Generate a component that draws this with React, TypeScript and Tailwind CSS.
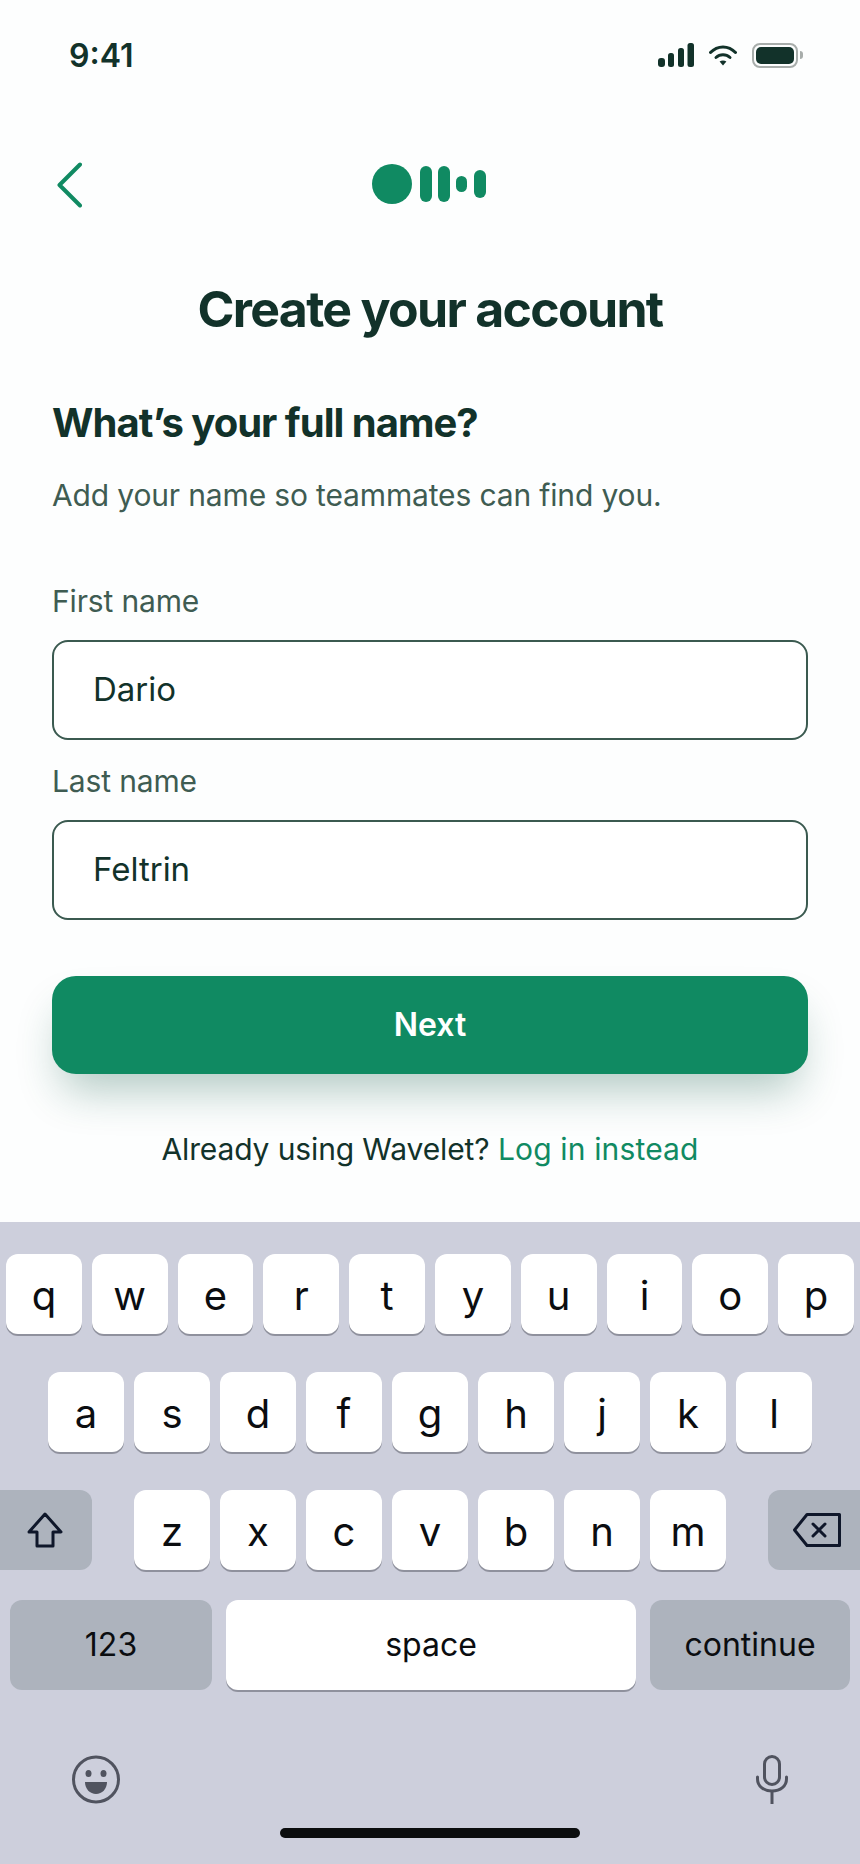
const DARK = "text-[#12322a]";

const rowOne = ["q", "w", "e", "r", "t", "y", "u", "i", "o", "p"];
const rowTwo = ["a", "s", "d", "f", "g", "h", "j", "k", "l"];
const rowThree = ["z", "x", "c", "v", "b", "n", "m"];

function StatusIcons() {
  return (
    <div className="flex items-center">
      {/* signal */}
      <svg width="36" height="24" viewBox="0 0 36 24" fill="#12322a">
        <rect x="0" y="15" width="7" height="9" rx="3" />
        <rect x="10" y="10" width="6" height="14" rx="2.5" />
        <rect x="20" y="5" width="6" height="19" rx="2.5" />
        <rect x="29.5" y="0" width="6.5" height="24" rx="2.5" />
      </svg>
      {/* wifi */}
      <svg className="ml-[15px]" width="28" height="22" viewBox="0 0 28 22" fill="none">
        <path d="M1.5 8.5C8.5 1 19.5 1 26.5 8.5" stroke="#12322a" strokeWidth="3" strokeLinecap="round" />
        <path d="M7 13.5C11 9.8 17 9.8 21 13.5" stroke="#12322a" strokeWidth="3" strokeLinecap="round" />
        <path d="M10.6 17.6C12.5 16 15.5 16 17.4 17.6L14 21.5Z" fill="#12322a" />
      </svg>
      {/* battery */}
      <div className="ml-[15px] flex items-center">
        <div className="w-[46px] h-[25px] rounded-[8px] border-2 border-[#a8adab] p-[2px]">
          <div className="w-full h-full rounded-[5px] bg-[#12322a]" />
        </div>
        <div className="ml-[2px] w-[3px] h-[8px] rounded-r-full bg-[#a8adab]" />
      </div>
    </div>
  );
}

function Logo() {
  return (
    <svg width="114" height="40" viewBox="0 0 114 40" fill="#108a62">
      <circle cx="20" cy="20" r="20" />
      <rect x="48" y="2" width="12" height="36" rx="6" />
      <rect x="66" y="2" width="12" height="36" rx="6" />
      <rect x="84" y="12" width="11" height="16" rx="5.5" />
      <rect x="102" y="6" width="12" height="28" rx="6" />
    </svg>
  );
}

function Field({ label, value, className }: { label: string; value: string; className: string }) {
  return (
    <div className={className}>
      <div className="h-[36px] leading-[36px] text-[30px] tracking-[-0.15px] text-[#3f5c52]">{label}</div>
      <div className={`mt-[21px] h-[100px] rounded-[16px] border-2 border-[#3b5a50] bg-white pl-[39px] flex items-center text-[33px] ${DARK}`}>
        {value}
      </div>
    </div>
  );
}

function Key({ label, className = "" }: { label: string; className?: string }) {
  return (
    <div className={`h-[80px] flex items-center justify-center rounded-[12px] bg-white shadow-[0_2px_0_#8f919d] text-[40px] text-[#0b0d10] pt-[4px] ${className}`}>
      {label}
    </div>
  );
}

export default function App() {
  return (
    <div className="w-[860px] h-[1864px] bg-[#fdfefe] flex flex-col overflow-hidden font-['Inter',sans-serif]">
      {/* status bar */}
      <div className="mt-[33px] h-[44px] pl-[69px] pr-[57px] flex items-center justify-between">
        <span className={`pt-[2px] text-[32px] font-semibold ${DARK}`}>9:41</span>
        <StatusIcons />
      </div>

      {/* nav */}
      <div className="mt-[86px] h-[44px] pl-[57px] pr-[57px] relative flex items-center">
        <svg width="25" height="46" viewBox="0 0 25 46" fill="none">
          <path d="M23 2.5L2.5 23L23 43.5" stroke="#108a62" strokeWidth="4" strokeLinecap="round" strokeLinejoin="round" />
        </svg>
        <div className="absolute left-[372px] top-[1px]">
          <Logo />
        </div>
      </div>

      <h1 className={`mt-[74px] h-[56px] leading-[56px] text-center text-[50px] font-bold tracking-[-1.7px] ${DARK}`}>Create your account</h1>

      <div className="px-[52px]">
        <h2 className={`mt-[62px] h-[48px] leading-[48px] text-[40px] font-bold tracking-[-1px] ${DARK}`}>What’s your full name?</h2>
        <p className="mt-[28px] h-[40px] leading-[40px] text-[30px] tracking-[-0.15px] text-[#3f5c52]">Add your name so teammates can find you.</p>

        <Field className="mt-[68px]" label="First name" value="Dario" />
        <Field className="mt-[23px]" label="Last name" value="Feltrin" />

        <button className="mt-[56px] w-full h-[98px] rounded-[24px] bg-[#108a62] text-white text-[32px] font-semibold shadow-[0_26px_44px_-10px_rgba(20,90,70,0.32)]">
          Next
        </button>

        <p className={`mt-[55px] h-[40px] leading-[40px] text-center text-[30px] ${DARK}`}>
          <span className="tracking-[-0.12px]">Already using Wavelet?</span> <span className="tracking-[0.15px] text-[#108a62]">Log in instead</span>
        </p>
      </div>

      {/* keyboard */}
      <div className="mt-auto h-[642px] bg-[#cdcfdc] pt-[32px] flex flex-col">
        <div className="px-[6px] flex gap-[10px]">
          {rowOne.map((k) => (
            <Key key={k} label={k} className="flex-1" />
          ))}
        </div>
        <div className="mt-[38px] pl-[48px] flex gap-[10px]">
          {rowTwo.map((k) => (
            <Key key={k} label={k} className="w-[76px]" />
          ))}
        </div>
        <div className="mt-[38px] flex justify-between">
          <div className="w-[92px] h-[80px] rounded-r-[12px] bg-[#adb3bd] flex items-center justify-center pr-[2px]">
            <svg width="36" height="36" viewBox="0 0 36 36" fill="none">
              <path d="M18 2L34 20H26V34H10V20H2Z" stroke="#0f172a" strokeWidth="3" strokeLinejoin="round" />
            </svg>
          </div>
          <div className="flex gap-[10px]">
            {rowThree.map((k) => (
              <Key key={k} label={k} className="w-[76px]" />
            ))}
          </div>
          <div className="w-[92px] h-[80px] rounded-l-[12px] bg-[#adb3bd] flex items-center justify-center pl-[5px]">
            <svg width="48" height="34" viewBox="0 0 48 34" fill="none">
              <path d="M14 1.5H46.5V32.5H14L1.5 17Z" stroke="#0f172a" strokeWidth="3" strokeLinejoin="round" />
              <path d="M20 11L32 23M32 11L20 23" stroke="#0f172a" strokeWidth="3" strokeLinecap="round" />
            </svg>
          </div>
        </div>
        <div className="mt-[30px] px-[10px] flex gap-[14px] text-[32px] text-[#0b0d10]">
          <div className="w-[202px] h-[90px] rounded-[12px] bg-[#adb3bd] flex items-center justify-center">123</div>
          <div className="flex-1 h-[90px] rounded-[12px] bg-white shadow-[0_2px_0_#8f919d] flex items-center justify-center">space</div>
          <div className="w-[200px] h-[90px] rounded-[12px] bg-[#adb3bd] flex items-center justify-center">continue</div>
        </div>
        <div className="mt-[65px] pl-[72px] pr-[72px] flex items-center justify-between">
          <svg width="48" height="49" viewBox="0 0 48 49" fill="none">
            <circle cx="24" cy="24.5" r="22.5" stroke="#50535f" strokeWidth="3" />
            <ellipse cx="16.5" cy="18.5" rx="3" ry="3.5" fill="#50535f" />
            <ellipse cx="31.5" cy="18.5" rx="3" ry="3.5" fill="#50535f" />
            <path d="M13 27H35C35 34 30 39 24 39C18 39 13 34 13 27Z" fill="#50535f" />
          </svg>
          <svg width="32" height="49" viewBox="0 0 32 49" fill="none">
            <rect x="8.5" y="1.5" width="15" height="28" rx="7.5" stroke="#50535f" strokeWidth="3" />
            <path d="M1.5 22V24C1.5 31 7.5 36 16 36C24.5 36 30.5 31 30.5 24V22" stroke="#50535f" strokeWidth="3" strokeLinecap="round" />
            <path d="M16 36V49" stroke="#50535f" strokeWidth="3" />
          </svg>
        </div>
        <div className="mt-[24px] mx-auto w-[300px] h-[10px] rounded-full bg-[#0b0d0e]" />
      </div>
    </div>
  );
}
